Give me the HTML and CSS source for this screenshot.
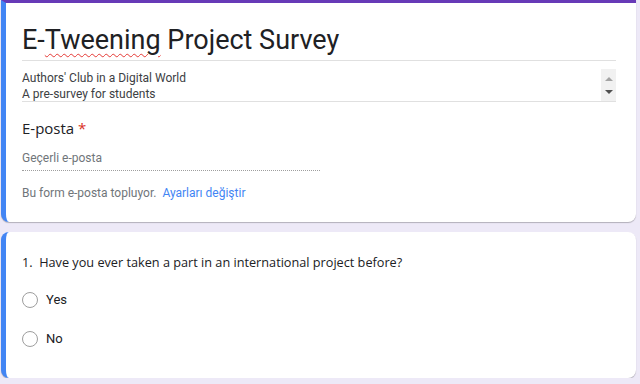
FILE: index.html
```html
<!DOCTYPE html>
<html lang="tr">
<head>
    <meta charset="UTF-8">
    <title>E-Tweening Project Survey</title>
    <link rel="stylesheet" href="styles.css">
</head>
<body>
    <div class="form">
        <div class="card header-card">
            <h1 class="form-title">E-<span class="spell">Tweening</span> Project Survey</h1>
            <div class="desc-box">
                <div class="desc-text">
                    <div>Authors' Club in a Digital World</div>
                    <div>A pre-survey for students</div>
                </div>
                <div class="scroller">
                    <span class="arrow up"></span>
                    <span class="arrow down"></span>
                </div>
            </div>

            <div class="email-label">E-posta <span class="required">*</span></div>
            <div class="email-input">Geçerli e-posta</div>
            <div class="email-note">
                Bu form e-posta topluyor.
                <a href="#" class="link">Ayarları değiştir</a>
            </div>
        </div>

        <div class="card question-card">
            <div class="question">1.&nbsp; Have you ever taken a part in an international project before?</div>
            <label class="option"><span class="radio"></span>Yes</label>
            <label class="option"><span class="radio"></span>No</label>
        </div>
    </div>
</body>
</html>
```

FILE: styles.css
```css
:root {
    --bg-color: #ede9f7;
    --purple: #673ab7;
    --blue: #4285f4;
    --text: #202124;
    --muted: #70757a;
}

body {
    margin: 0;
    background: var(--bg-color);
    font-family: Roboto, "Noto Sans", Arial, sans-serif;
    color: var(--text);
}

.form {
    width: 635px;
    margin-left: 1px;
}

.card {
    background: #fff;
    border-left: 5px solid var(--blue);
    border-radius: 0 8px 8px 8px;
    box-shadow: 0 1px 1px rgba(0, 0, 0, 0.25);
    padding: 0 20px 0 16px;
}

.header-card {
    border-top: 3px solid var(--purple);
    border-radius: 0 0 8px 8px;
    padding-top: 19px;
    padding-bottom: 20px;
    height: 180px;
}

.form-title {
    margin: 0;
    font-family: Roboto, "Open Sans", sans-serif;
    font-weight: 400;
    font-size: 27px;
    line-height: 36px;
    padding-bottom: 2px;
    border-bottom: 1px solid #e0e0e0;
}

.spell {
    text-decoration: underline wavy #e53935;
    text-decoration-thickness: 1px;
    text-underline-offset: 4px;
}

.desc-box {
    display: flex;
    margin-top: 8px;
    border-bottom: 1px solid #e0e0e0;
    height: 32px;
}

.desc-text {
    flex: 1;
    font-size: 12px;
    line-height: 16px;
    color: #3c4043;
    padding-top: 1px;
}

.scroller {
    width: 15px;
    background: #f1f1f1;
    display: flex;
    flex-direction: column;
    justify-content: space-around;
    align-items: center;
    padding: 3px 0;
}

.arrow {
    width: 0;
    height: 0;
    border-left: 4px solid transparent;
    border-right: 4px solid transparent;
}

.arrow.up {
    border-bottom: 4px solid #a3a3a3;
}

.arrow.down {
    border-top: 4px solid #505050;
}

.email-label {
    margin-top: 16px;
    font-family: "Open Sans", Roboto, sans-serif;
    font-size: 15px;
    line-height: 20px;
}

.required {
    color: #d93025;
}

.email-input {
    width: 298px;
    margin-top: 9px;
    padding: 3px 0 4px;
    font-size: 12px;
    line-height: 16px;
    color: var(--muted);
    border-bottom: 1px dotted #9e9e9e;
}

.email-note {
    margin-top: 14px;
    font-size: 12px;
    line-height: 16px;
    color: var(--muted);
}

.link {
    color: var(--blue);
    text-decoration: none;
    margin-left: 3px;
}

.question-card {
    margin-top: 10px;
    border-radius: 8px;
    padding-top: 21px;
    height: 125px;
}

.question {
    font-family: "Open Sans", Roboto, sans-serif;
    font-size: 12.7px;
    line-height: 18px;
    margin-bottom: 9px;
}

.option {
    display: flex;
    align-items: center;
    gap: 8px;
    height: 39px;
    font-size: 13px;
    color: var(--text);
}

.radio {
    width: 14px;
    height: 14px;
    border: 1px solid #9e9e9e;
    border-radius: 50%;
}
```
